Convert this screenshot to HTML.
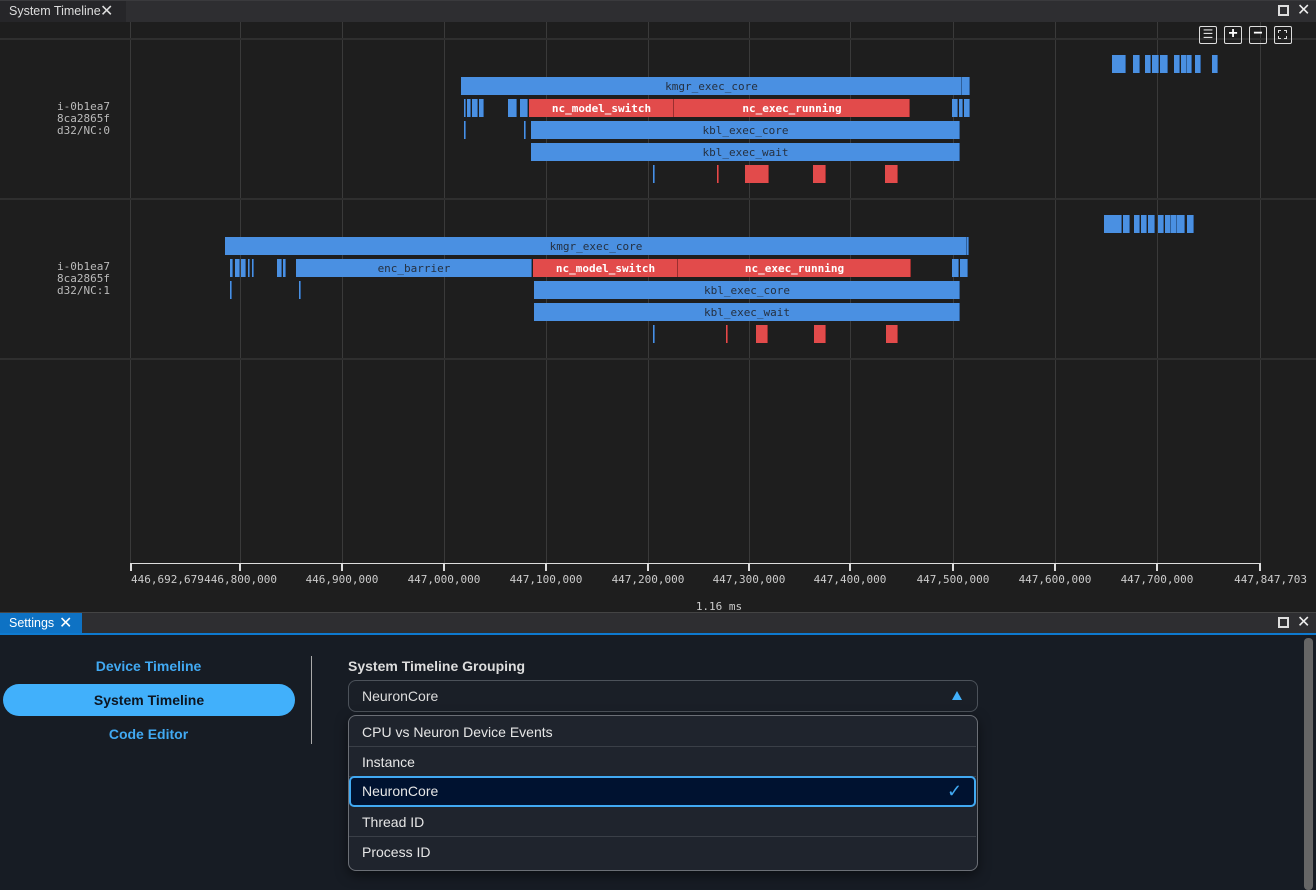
<!DOCTYPE html>
<html><head><meta charset="utf-8"><style>
*{margin:0;padding:0;box-sizing:border-box}
body{width:1316px;height:890px;background:#1e1e1e;position:relative;overflow:hidden;font-family:"Liberation Sans",sans-serif}
div{position:absolute}
.b{background:#4a90e2;height:18px;box-shadow:inset -1px 0 0 #2f5f9a}
.r{background:#e24b4b;height:18px;box-shadow:inset -1px 0 0 #9a2f2f}
.t{font-family:"DejaVu Sans Mono","Liberation Mono",monospace;font-size:11px;line-height:19px;text-align:center;color:#253040;white-space:nowrap;overflow:hidden}
.r.t{color:#fff;font-weight:bold}
.vl{top:22px;height:541px;width:1px;background:#3a3a3a}
.hl{left:0;width:1316px;height:2px;background:#2f2f2f}
.tk{top:563px;width:2px;height:8px;background:#ddd}
.ax{top:573px;font-family:"DejaVu Sans Mono","Liberation Mono",monospace;font-size:11px;color:#ccc;width:100px;text-align:center;white-space:nowrap}
.lab{font-family:"DejaVu Sans Mono","Liberation Mono",monospace;font-size:11px;color:#bbb;line-height:12px;text-align:right;width:110px;left:0}
.ib{width:18px;height:18px;border:1.5px solid #ddd;border-radius:2px;top:26px}
.it{left:349px;width:627px;height:30px;line-height:30px;padding-left:13px;color:#e6e6e6;font-size:14px;border-bottom:1px solid #3a3f47;font-family:"Liberation Sans","DejaVu Sans",sans-serif}
.nav{left:0;width:297px;text-align:center;color:#41a9f2;font-weight:bold;font-size:14px;line-height:20px}
</style></head><body>
<div style="left:0;top:0;width:1316px;height:22px;background:#2e2e31;border-top:1px solid #3a3a3d"></div>
<div style="left:0;top:1px;width:126px;height:21px;background:#262629;color:#ddd;font-size:12.5px;line-height:21px;padding-left:9px">System Timeline</div>
<div style="left:100px;top:1px;color:#ddd;font-size:16px;line-height:21px">✕</div>
<div style="left:1278px;top:5px;width:11px;height:11px;border:2px dashed #ddd"></div>
<div style="left:1297px;top:0;color:#eee;font-size:16px;line-height:22px">✕</div>

<div class="vl" style="left:130px"></div><div class="vl" style="left:240px"></div><div class="vl" style="left:342px"></div><div class="vl" style="left:444px"></div><div class="vl" style="left:546px"></div><div class="vl" style="left:648px"></div><div class="vl" style="left:749px"></div><div class="vl" style="left:850px"></div><div class="vl" style="left:953px"></div><div class="vl" style="left:1055px"></div><div class="vl" style="left:1157px"></div><div class="vl" style="left:1260px"></div>
<div class="hl" style="top:38px"></div><div class="hl" style="top:198px"></div><div class="hl" style="top:358px"></div>

<div class="ib" style="left:1199px;font-size:12px;color:#ddd;line-height:14px;text-align:center">☰</div>
<div class="ib" style="left:1224px;color:#fff;font-weight:bold;font-size:16px;line-height:14px;text-align:center">+</div>
<div class="ib" style="left:1249px;color:#fff;font-weight:bold;font-size:16px;line-height:14px;text-align:center">−</div>
<div class="ib" style="left:1274px"><div style="left:3px;top:3px;width:9px;height:9px;border:1.5px dashed #ddd"></div></div>

<div class="lab" style="top:101px">i-0b1ea7<br>8ca2865f<br>d32/NC:0</div>
<div class="lab" style="top:261px">i-0b1ea7<br>8ca2865f<br>d32/NC:1</div>

<div class="b" style="left:1112px;top:55px;width:14px"></div><div class="b" style="left:1133px;top:55px;width:7px"></div><div class="b" style="left:1145px;top:55px;width:6px"></div><div class="b" style="left:1152px;top:55px;width:7px"></div><div class="b" style="left:1160px;top:55px;width:8px"></div><div class="b" style="left:1174px;top:55px;width:6px"></div><div class="b" style="left:1181px;top:55px;width:6px"></div><div class="b" style="left:1187px;top:55px;width:5px"></div><div class="b" style="left:1195px;top:55px;width:6px"></div><div class="b" style="left:1212px;top:55px;width:6px"></div>
<div class="b t" style="left:461px;top:77px;width:501px">kmgr_exec_core</div><div class="b" style="left:962px;top:77px;width:8px"></div>
<div class="b" style="left:464px;top:99px;width:2px"></div><div class="b" style="left:467px;top:99px;width:4px"></div><div class="b" style="left:472px;top:99px;width:6px"></div><div class="b" style="left:479px;top:99px;width:5px"></div><div class="b" style="left:508px;top:99px;width:9px"></div><div class="b" style="left:520px;top:99px;width:8px"></div>
<div class="r t" style="left:529px;top:99px;width:145px">nc_model_switch</div><div class="r t" style="left:674px;top:99px;width:236px">nc_exec_running</div>
<div class="b" style="left:952px;top:99px;width:6px"></div><div class="b" style="left:959px;top:99px;width:4px"></div><div class="b" style="left:964px;top:99px;width:6px"></div>
<div class="b" style="left:464px;top:121px;width:2px"></div><div class="b" style="left:524px;top:121px;width:2px"></div>
<div class="b t" style="left:531px;top:121px;width:429px">kbl_exec_core</div>
<div class="b t" style="left:531px;top:143px;width:429px">kbl_exec_wait</div>
<div class="b" style="left:653px;top:165px;width:2px"></div><div class="r" style="left:717px;top:165px;width:2px"></div><div class="r" style="left:745px;top:165px;width:24px"></div><div class="r" style="left:813px;top:165px;width:13px"></div><div class="r" style="left:885px;top:165px;width:13px"></div>

<div class="b" style="left:1104px;top:215px;width:18px"></div><div class="b" style="left:1123px;top:215px;width:7px"></div><div class="b" style="left:1134px;top:215px;width:6px"></div><div class="b" style="left:1141px;top:215px;width:6px"></div><div class="b" style="left:1148px;top:215px;width:7px"></div><div class="b" style="left:1158px;top:215px;width:6px"></div><div class="b" style="left:1165px;top:215px;width:6px"></div><div class="b" style="left:1171px;top:215px;width:6px"></div><div class="b" style="left:1177px;top:215px;width:8px"></div><div class="b" style="left:1187px;top:215px;width:7px"></div>
<div class="b t" style="left:225px;top:237px;width:742px">kmgr_exec_core</div><div class="b" style="left:967px;top:237px;width:2px"></div>
<div class="b" style="left:230px;top:259px;width:3px"></div><div class="b" style="left:235px;top:259px;width:5px"></div><div class="b" style="left:241px;top:259px;width:5px"></div><div class="b" style="left:248px;top:259px;width:2px"></div><div class="b" style="left:252px;top:259px;width:2px"></div><div class="b" style="left:277px;top:259px;width:5px"></div><div class="b" style="left:283px;top:259px;width:3px"></div>
<div class="b t" style="left:296px;top:259px;width:236px">enc_barrier</div>
<div class="r t" style="left:533px;top:259px;width:145px">nc_model_switch</div><div class="r t" style="left:678px;top:259px;width:233px">nc_exec_running</div>
<div class="b" style="left:952px;top:259px;width:7px"></div><div class="b" style="left:960px;top:259px;width:8px"></div>
<div class="b" style="left:230px;top:281px;width:2px"></div><div class="b" style="left:299px;top:281px;width:2px"></div>
<div class="b t" style="left:534px;top:281px;width:426px">kbl_exec_core</div>
<div class="b t" style="left:534px;top:303px;width:426px">kbl_exec_wait</div>
<div class="b" style="left:653px;top:325px;width:2px"></div><div class="r" style="left:726px;top:325px;width:2px"></div><div class="r" style="left:756px;top:325px;width:12px"></div><div class="r" style="left:814px;top:325px;width:12px"></div><div class="r" style="left:886px;top:325px;width:12px"></div>

<div style="left:130px;top:563px;width:1131px;height:1px;background:#ddd"></div>
<div class="tk" style="left:130px"></div><div class="tk" style="left:239px"></div><div class="tk" style="left:341px"></div><div class="tk" style="left:443px"></div><div class="tk" style="left:545px"></div><div class="tk" style="left:647px"></div><div class="tk" style="left:748px"></div><div class="tk" style="left:849px"></div><div class="tk" style="left:952px"></div><div class="tk" style="left:1054px"></div><div class="tk" style="left:1156px"></div><div class="tk" style="left:1259px"></div>
<div class="ax" style="left:131px;text-align:left">446,692,679</div>
<div class="ax" style="left:190px;text-align:right;width:87px">446,800,000</div>
<div class="ax" style="left:292px">446,900,000</div><div class="ax" style="left:394px">447,000,000</div><div class="ax" style="left:496px">447,100,000</div><div class="ax" style="left:598px">447,200,000</div><div class="ax" style="left:699px">447,300,000</div><div class="ax" style="left:800px">447,400,000</div><div class="ax" style="left:903px">447,500,000</div><div class="ax" style="left:1005px">447,600,000</div><div class="ax" style="left:1107px">447,700,000</div>
<div class="ax" style="left:1207px;text-align:right">447,847,703</div>
<div class="ax" style="left:669px;top:600px">1.16 ms</div>

<div style="left:0;top:612px;width:1316px;height:22px;background:#2e2e31;border-top:1px solid #444"></div>
<div style="left:0;top:613px;width:82px;height:21px;background:#0e72c4;color:#fff;font-size:12.5px;line-height:21px;padding-left:9px">Settings</div>
<div style="left:59px;top:613px;color:#fff;font-size:16px;line-height:21px">✕</div>
<div style="left:1278px;top:617px;width:11px;height:11px;border:2px dashed #ddd"></div>
<div style="left:1297px;top:612px;color:#eee;font-size:16px;line-height:22px">✕</div>
<div style="left:0;top:633px;width:1316px;height:2px;background:#0e7ad0"></div>
<div style="left:0;top:635px;width:1316px;height:255px;background:#171c24"></div>
<div style="left:1304px;top:638px;width:9px;height:252px;background:#666;border-radius:4px"></div>

<div class="nav" style="top:656px">Device Timeline</div>
<div style="left:3px;top:684px;width:292px;height:32px;border-radius:16px;background:#41b0fb;text-align:center;color:#0d1520;font-weight:bold;font-size:14px;line-height:32px">System Timeline</div>
<div class="nav" style="top:724px">Code Editor</div>
<div style="left:311px;top:656px;width:1px;height:88px;background:#aaa"></div>

<div style="left:348px;top:656px;color:#ddd;font-weight:bold;font-size:14px;line-height:20px">System Timeline Grouping</div>
<div style="left:348px;top:680px;width:630px;height:32px;border:1px solid #4c525a;border-radius:8px;background:#1a1f27;color:#ddd;font-size:14px;line-height:30px;padding-left:13px">NeuronCore</div>
<div style="left:952px;top:691px;width:0;height:0;border-left:5.5px solid transparent;border-right:5.5px solid transparent;border-bottom:9px solid #41b0fb"></div>
<div style="left:348px;top:715px;width:630px;height:156px;border:1.5px solid #6b6f76;border-radius:8px;background:#1f242d;box-shadow:0 4px 12px rgba(0,0,0,.5)"></div>
<div class="it" style="top:717px">CPU vs Neuron Device Events</div>
<div class="it" style="top:747px">Instance</div>
<div class="it" style="top:776px;left:349px;height:31px;background:#001230;border:2px solid #41a9f2;border-radius:5px;line-height:27px;padding-left:11px">NeuronCore</div>
<div style="left:947px;top:780px;color:#41a9f2;font-size:18px;line-height:22px">✓</div>
<div class="it" style="top:807px">Thread ID</div>
<div class="it" style="top:837px;border-bottom:none">Process ID</div>
</body></html>
